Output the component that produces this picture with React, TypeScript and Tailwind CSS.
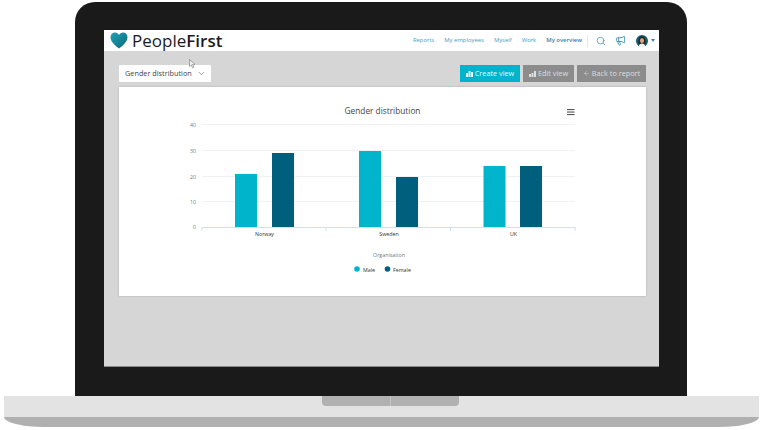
import { ChevronDown, Search, Megaphone, ArrowLeft } from "lucide-react"

const navItems = ["Reports", "My employees", "Myself", "Work"]

const gridLines = [
    { label: "40", y: 124.5 },
    { label: "30", y: 150.5 },
    { label: "20", y: 176.5 },
    { label: "10", y: 201.5 },
]

const bars = [
    { x: 235, y: 174, color: "#00b4cb" },
    { x: 272, y: 153, color: "#005f7d" },
    { x: 359, y: 151, color: "#00b4cb" },
    { x: 396, y: 177, color: "#005f7d" },
    { x: 483.5, y: 166, color: "#00b4cb" },
    { x: 520, y: 166, color: "#005f7d" },
]

function Heart() {
    return (
        <svg width="18" height="17" viewBox="0 0 18 17" className="shrink-0">
            <defs>
                <linearGradient id="heartFill" x1="0" y1="0" x2="1" y2="1">
                    <stop offset="0" stopColor="#1fa3b5" />
                    <stop offset="1" stopColor="#0a6a7c" />
                </linearGradient>
            </defs>
            <path d="M9 16.5 C6 14 .5 10 .5 5.2 C.5 2.4 2.6 .5 5 .5 C6.800 .5 8.200 1.500 9 3 C9.800 1.500 11.200 .5 13 .5 C15.400 .5 17.500 2.400 17.500 5.200 C17.500 10 12 14 9 16.500 Z" fill="url(#heartFill)" />
        </svg>
    )
}

function Avatar() {
    return (
        <svg width="12" height="12" viewBox="0 0 12 12">
            <circle cx="6" cy="6" r="6" fill="#0f5f77" />
            <path d="M2.500 6 C2.500 2.500 4 1.200 6 1.200 C8.200 1.200 9.500 2.800 9.500 6 L9.500 9 L2.500 9 Z" fill="#33231d" />
            <ellipse cx="6" cy="5.600" rx="2" ry="2.500" fill="#d9a98c" />
            <path d="M2.500 12 C3 9 4.500 8.500 6 8.500 C7.500 8.500 9 9 9.500 12 Z" fill="#f2f2f2" />
        </svg>
    )
}

function Chart() {
    return (
        <svg viewBox="119 87 527 209" className="block w-full h-full" fontFamily="'Open Sans', sans-serif">
            <text x="382.500" y="113.500" fontSize="8.300" textAnchor="middle" fill="#444">Gender distribution</text>
            <g fill="#555">
                <rect x="567" y="109" width="7.500" height="1.100" />
                <rect x="567" y="111.500" width="7.500" height="1.100" />
                <rect x="567" y="114" width="7.500" height="1.100" />
            </g>
            {gridLines.map((line) => (
                <g key={line.label}>
                    <line x1="202" x2="575" y1={line.y} y2={line.y} stroke="#eff1f4" strokeWidth="1" />
                    <text x="196" y={line.y + 2} fontSize="5.200" textAnchor="end" fill="#777">{line.label}</text>
                </g>
            ))}
            <text x="196" y="229" fontSize="5.200" textAnchor="end" fill="#777">0</text>
            {bars.map((bar) => (
                <rect key={bar.x} x={bar.x} y={bar.y} width="22" height={227 - bar.y} fill={bar.color} />
            ))}
            <line x1="202" x2="575.500" y1="227.500" y2="227.500" stroke="#d5dfee" strokeWidth="1" />
            {[202, 326, 450.500, 575].map((x) => (
                <line key={x} x1={x} x2={x} y1="227" y2="231" stroke="#d5dfee" strokeWidth="1" />
            ))}
            <text x="264.500" y="235.500" fontSize="5.300" textAnchor="middle" fill="#333">Norway</text>
            <text x="389" y="235.500" fontSize="5.300" textAnchor="middle" fill="#333">Sweden</text>
            <text x="513.500" y="235.500" fontSize="5.300" textAnchor="middle" fill="#333">UK</text>
            <text x="389" y="256.500" fontSize="5.300" textAnchor="middle" fill="#777">Organisation</text>
            <circle cx="357" cy="269" r="2.800" fill="#00b4cb" />
            <text x="363" y="271.500" fontSize="5.300" fill="#333">Male</text>
            <circle cx="387.500" cy="269" r="2.800" fill="#005f7d" />
            <text x="393" y="271.500" fontSize="5.300" fill="#333">Female</text>
        </svg>
    )
}

export default function App() {
    return (
        <div className="w-[763px] h-[430px] bg-white flex flex-col items-start overflow-hidden font-['Open_Sans',sans-serif]">
            <div className="mt-[2px] ml-[75px] w-[612px] h-[394px] shrink-0 bg-[#1a1a1a] rounded-t-[20px] pt-[28px] pl-[29px] pr-[28px]">
                <div className="relative h-[337px] bg-[#d6d6d6] border-b border-[#8a8a8a] flex flex-col">
                    <div className="h-[21px] shrink-0 bg-white flex items-center pl-[6px] pr-[4px]">
                        <Heart />
                        <span className="ml-[4px] text-[17px] leading-none font-medium text-[#1c1c1c]">People<span className="font-semibold">First</span></span>
                        <div className="ml-auto flex items-center gap-[10px] text-[5.900px] text-[#3f9ec4]">
                            {navItems.map((item) => (
                                <span key={item}>{item}</span>
                            ))}
                            <span className="font-semibold text-[#1f86b3]">My overview</span>
                        </div>
                        <div className="ml-[5px] w-px h-[12px] bg-[#e8e8e8]"></div>
                        <Search size={10} strokeWidth={1.600} color="#2f86ad" className="ml-[8px]" />
                        <Megaphone size={11} strokeWidth={1.800} color="#2f86ad" className="ml-[9px]" />
                        <div className="ml-[10px]"><Avatar /></div>
                        <div className="ml-[3px] w-0 h-0 border-x-[2.500px] border-x-transparent border-t-[3px] border-t-[#2f86ad]"></div>
                    </div>
                    <div className="flex items-center pl-[15px] pr-[13px] mt-[14px]">
                        <div className="w-[92px] h-[17px] bg-white rounded-[1px] flex items-center pl-[6px] text-[7.300px] text-[#444] whitespace-nowrap">
                            Gender distribution
                            <ChevronDown size={9} strokeWidth={1.500} color="#555" className="ml-auto mr-[5px]" />
                        </div>
                        <div className="ml-auto flex gap-[3px] text-[7.300px] text-[#eef6f7]">
                            <div className="w-[60px] h-[17px] bg-[#00b4cb] flex items-center justify-center gap-[2px]">
                                <svg width="7" height="6" viewBox="0 0 7 6" fill="currentColor"><rect y="2" width="2" height="4" /><rect x="2.500" width="2" height="6" /><rect x="5" y="1" width="2" height="5" /></svg>
                                Create view
                            </div>
                            <div className="w-[51px] h-[17px] bg-[#8c8c8c] flex items-center justify-center gap-[2px] text-[#dedede]">
                                <svg width="7" height="6" viewBox="0 0 7 6" fill="currentColor"><rect y="3" width="2" height="3" /><rect x="2.500" y="2" width="2" height="4" /><rect x="5" width="2" height="6" /></svg>
                                Edit view
                            </div>
                            <div className="w-[69px] h-[17px] bg-[#8c8c8c] flex items-center justify-center gap-[2px] text-[#dedede]">
                                <ArrowLeft size={7} strokeWidth={1.500} />
                                Back to report
                            </div>
                        </div>
                    </div>
                    <div className="ml-[15px] mr-[13px] mt-[5px] h-[209px] bg-white shadow-[0_0_2px_rgba(0,0,0,0.2)]">
                        <Chart />
                    </div>
                    {/* pointer sitting over the page */}
                    <svg width="7" height="10" viewBox="0 0 7 10" className="absolute left-[85px] top-[29px]">
                        <path d="M.5 .5 L.5 7.500 L2.300 6 L3.500 8.800 L4.800 8.200 L3.600 5.500 L6 5.300 Z" fill="#eee" stroke="#777" strokeWidth=".6" />
                    </svg>
                </div>
            </div>
            <div className="ml-[4px] w-[755px] h-[21px] shrink-0 bg-[#e3e3e3] flex justify-center">
                <div className="ml-[18px] w-[137px] h-[10px] bg-[#b1b1b1] rounded-b-[4px] flex justify-center">
                    <div className="w-px h-full bg-[#c4c4c4]"></div>
                </div>
            </div>
            <div className="ml-[4px] w-[755px] h-[10px] shrink-0 bg-[#b0b0b0] rounded-bl-[40px_10px] rounded-br-[40px_10px]"></div>
        </div>
    )
}
